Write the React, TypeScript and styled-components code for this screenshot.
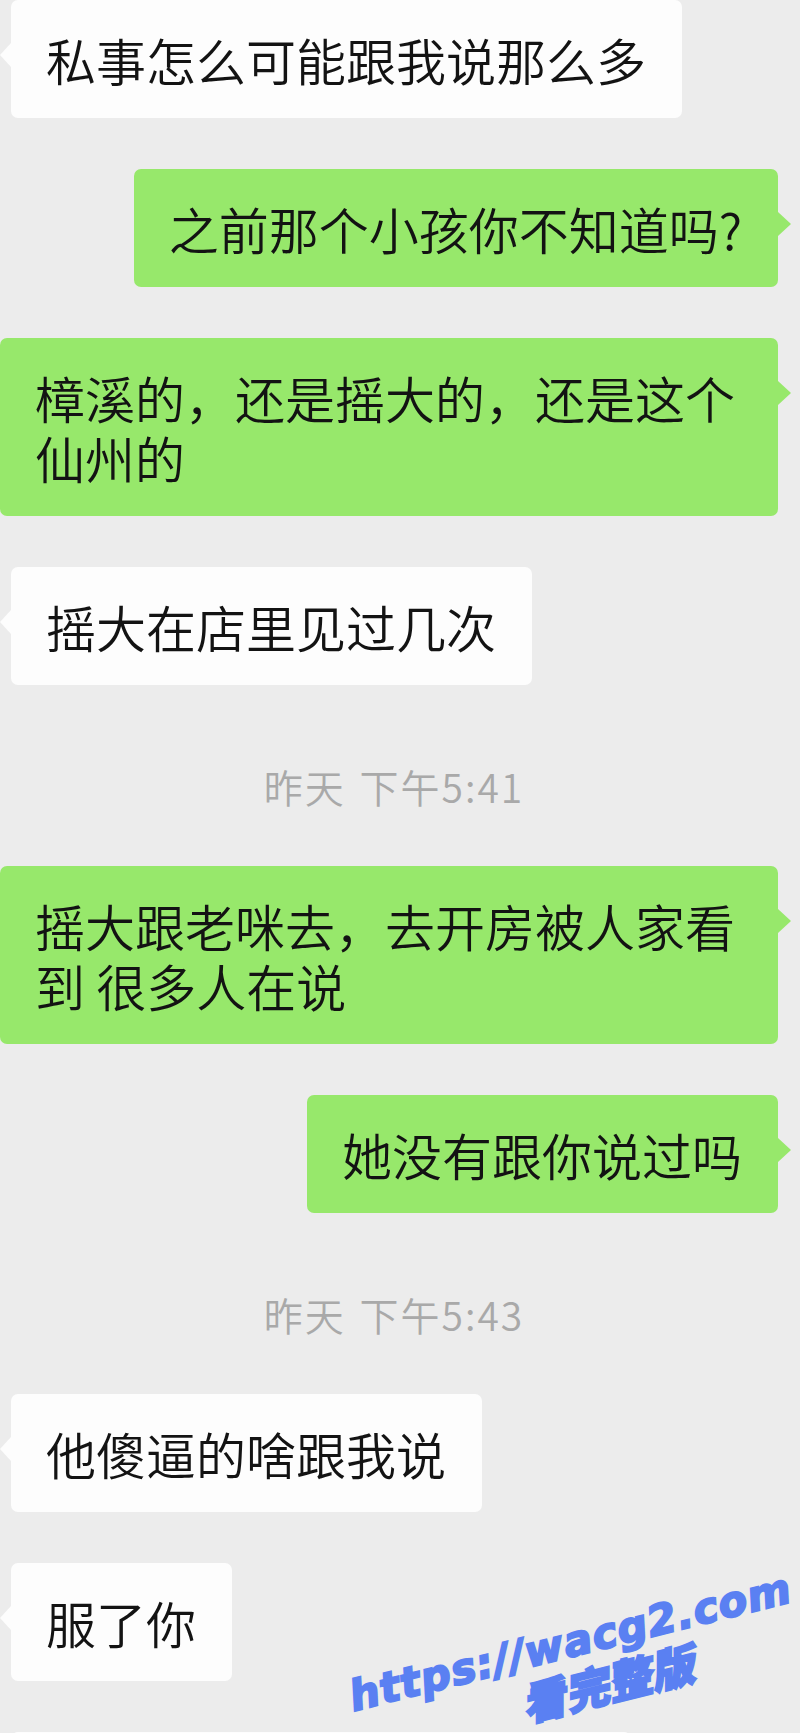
import React from 'react';
import styled, { createGlobalStyle } from 'styled-components';

const GlobalStyle = createGlobalStyle`
  html,
  body {
    margin: 0;
    padding: 0;
    background: #ececec;
  }
  body {
    font-family: 'Noto Sans CJK SC', 'Noto Sans', sans-serif;
  }
`;

const GREEN = '#97e86b';
const WHITE = '#fdfdfd';
const BLUE = '#5a80f2';

const ChatPage = styled.main`
  position: relative;
  width: 800px;
  height: 1733px;
  overflow: hidden;
  background: #ececec;
  display: flex;
  flex-direction: column;
  gap: 51px;
`;

const Row = styled.div<{ $mine?: boolean }>`
  display: flex;
  justify-content: ${(p) => (p.$mine ? 'flex-end' : 'flex-start')};
  padding: ${(p) => (p.$mine ? '0 22px 0 0' : '0 0 0 11px')};
`;

const Bubble = styled.div<{ $mine?: boolean; $width?: number }>`
  position: relative;
  box-sizing: border-box;
  max-width: 778px;
  min-height: 118px;
  ${(p) => (p.$width ? `width: ${p.$width}px;` : '')}
  padding: 29px 36px 29px 35px;
  font-size: 50px;
  font-weight: 350;
  line-height: 60px;
  color: #131313;
  background: ${(p) => (p.$mine ? GREEN : WHITE)};
  border-radius: 7px;
  word-break: break-all;
  &::after {
    content: '';
    position: absolute;
    top: 43px;
    border-top: 12px solid transparent;
    border-bottom: 12px solid transparent;
    ${(p) =>
      p.$mine
        ? `right: -13px; border-left: 13px solid ${GREEN};`
        : `left: -11px; border-right: 11px solid ${WHITE};`}
  }
`;

const Timestamp = styled.div`
  padding: 28px 12px 7px 0;
  text-align: center;
  font-size: 39px;
  font-weight: 350;
  line-height: 44px;
  color: #a9a9a9;
  letter-spacing: 2px;
  word-spacing: 3px;
`;

const Watermark = styled.div`
  position: absolute;
  left: 576px;
  top: 1665px;
  transform: translate(-50%, -50%) rotate(-14deg);
  color: ${BLUE};
  font-weight: 900;
  font-style: italic;
  white-space: nowrap;
  pointer-events: none;
  -webkit-text-stroke: 2px ${BLUE};
  text-shadow: 0 0 1px #ffffff;
`;

const WatermarkUrl = styled.div`
  font-family: 'DejaVu Sans', sans-serif;
  font-size: 42px;
  line-height: 48px;
  letter-spacing: 1px;
`;

const WatermarkNote = styled.div`
  padding-left: 165px;
  font-family: 'Noto Sans CJK SC', sans-serif;
  font-size: 44px;
  line-height: 46px;
`;

type Item =
  | { kind: 'msg'; mine: boolean; text: string; width?: number }
  | { kind: 'time'; text: string };

const items: Item[] = [
  { kind: 'msg', mine: false, text: '私事怎么可能跟我说那么多' },
  { kind: 'msg', mine: true, text: '之前那个小孩你不知道吗?' },
  { kind: 'msg', mine: true, text: '樟溪的，还是摇大的，还是这个仙州的' },
  { kind: 'msg', mine: false, text: '摇大在店里见过几次' },
  { kind: 'time', text: '昨天 下午5:41' },
  { kind: 'msg', mine: true, text: '摇大跟老咪去，去开房被人家看到 很多人在说' },
  { kind: 'msg', mine: true, text: '她没有跟你说过吗' },
  { kind: 'time', text: '昨天 下午5:43' },
  { kind: 'msg', mine: false, text: '他傻逼的啥跟我说' },
  { kind: 'msg', mine: false, text: '服了你' },
  { kind: 'msg', mine: false, text: '', width: 620 },
];

export default function App(): JSX.Element {
  return (
    <>
      <GlobalStyle />
      <ChatPage>
        {items.map((item, i) =>
          item.kind === 'time' ? (
            <Timestamp key={i}>{item.text}</Timestamp>
          ) : (
            <Row key={i} $mine={item.mine}>
              <Bubble $mine={item.mine} $width={item.width}>
                {item.text}
              </Bubble>
            </Row>
          )
        )}
        <Watermark>
          <WatermarkUrl>https://wacg2.com</WatermarkUrl>
          <WatermarkNote>看完整版</WatermarkNote>
        </Watermark>
      </ChatPage>
    </>
  );
}
